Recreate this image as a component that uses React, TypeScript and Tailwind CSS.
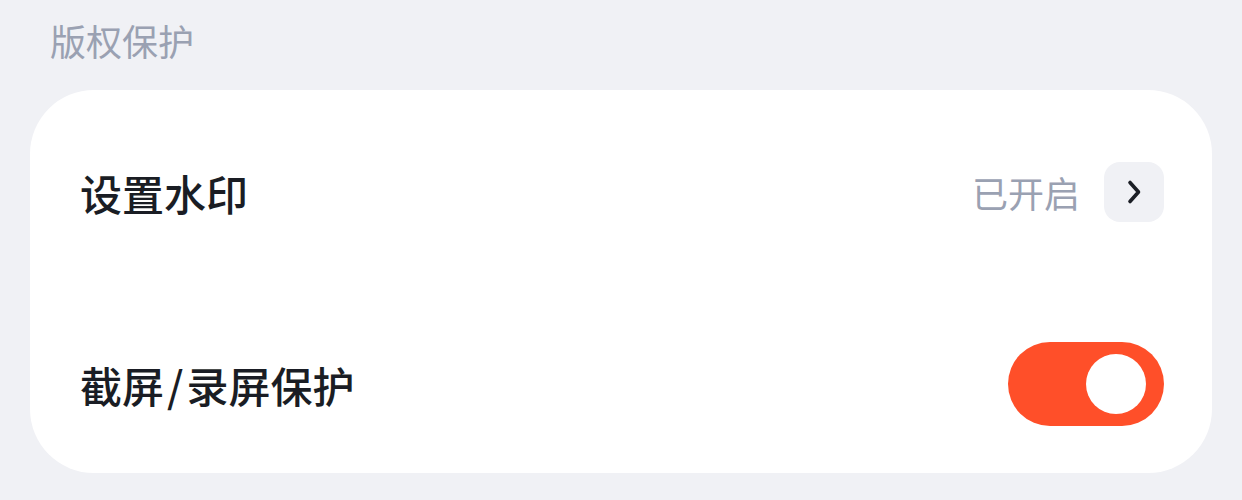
import React from "react";

const font = { fontFamily: '"Noto Sans CJK SC", "Noto Sans", sans-serif' };

function Chevron() {
  return (
    <svg width="18" height="26" viewBox="0 0 18 26" fill="none">
      <path d="M5 3.5 L13.5 13 L5 22.5" stroke="#1c1f26" strokeWidth="3.6" strokeLinecap="round" strokeLinejoin="round" />
    </svg>
  );
}

export default function App() {
  return (
    <div className="w-[1242px] h-[500px] bg-[#f0f1f5] overflow-hidden" style={font}>
      <div className="h-[90px] pl-[50px] pt-[18px]">
        <span className="text-[36px] leading-[44px] text-[#9aa1b2]">版权保护</span>
      </div>
      <div className="mx-[30px] bg-white rounded-[64px] h-[383px] pl-[50px] pr-[48px] pt-[72px] flex flex-col">
        <div className="h-[60px] flex items-center justify-between">
          <span className="text-[42px] font-medium text-[#1a1d24]">设置水印</span>
          <div className="flex items-center gap-[24px]">
            <span className="text-[36px] text-[#9aa1b2]">已开启</span>
            <button className="w-[60px] h-[60px] rounded-[16px] bg-[#f0f1f5] flex items-center justify-center">
              <Chevron />
            </button>
          </div>
        </div>
        <div className="h-[84px] mt-[120px] flex items-center justify-between">
          <span className="text-[42px] font-medium text-[#1a1d24]">
            截屏<span className="mx-[3px]">/</span>录屏保护
          </span>
          <div className="w-[156px] h-[84px] rounded-full bg-[#ff4f29] flex items-center justify-end pr-[18px]">
            <div className="w-[60px] h-[60px] rounded-full bg-white" />
          </div>
        </div>
      </div>
    </div>
  );
}
